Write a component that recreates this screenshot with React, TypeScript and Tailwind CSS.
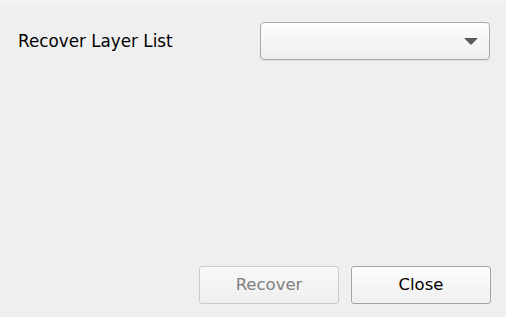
import React from "react";

export default function App() {
  return (
    <div
      className="w-[506px] h-[317px] bg-[#efefef] flex flex-col relative overflow-hidden"
      style={{ fontFamily: '"DejaVu Sans", "Liberation Sans", sans-serif' }}
    >
      <div className="h-[3px] bg-[#f5f5f5] shrink-0" />
      <div className="flex items-center pl-[18px] pr-[16px] pt-[19px]">
        <div className="flex-1 text-[16.8px] text-black pt-[1px]">Recover Layer List</div>
        <div className="w-[230px] h-[38px] rounded-[4px] border border-[#a9a9a9] bg-gradient-to-b from-[#fdfdfd] to-[#eeeeee] flex items-center justify-end pr-[11px] shadow-[0_1px_0_rgba(0,0,0,0.06)]">
          <svg width="14" height="7" viewBox="0 0 14 7">
            <polygon points="0,0 14,0 7,7" fill="#5a5a5a" />
          </svg>
        </div>
      </div>
      <div className="flex-1" />
      <div className="flex justify-end gap-[12px] pr-[15px] pb-[13px]">
        <button className="w-[140px] h-[38px] rounded-[3px] border border-[#cbcbcb] bg-gradient-to-b from-[#f8f8f8] to-[#efefef] text-[16.5px] text-[#808080]">
          Recover
        </button>
        <button className="w-[140px] h-[38px] rounded-[3px] border border-[#a3a3a3] bg-gradient-to-b from-[#fdfdfd] to-[#f0f0f0] text-[16.5px] text-black">
          Close
        </button>
      </div>
    </div>
  );
}
